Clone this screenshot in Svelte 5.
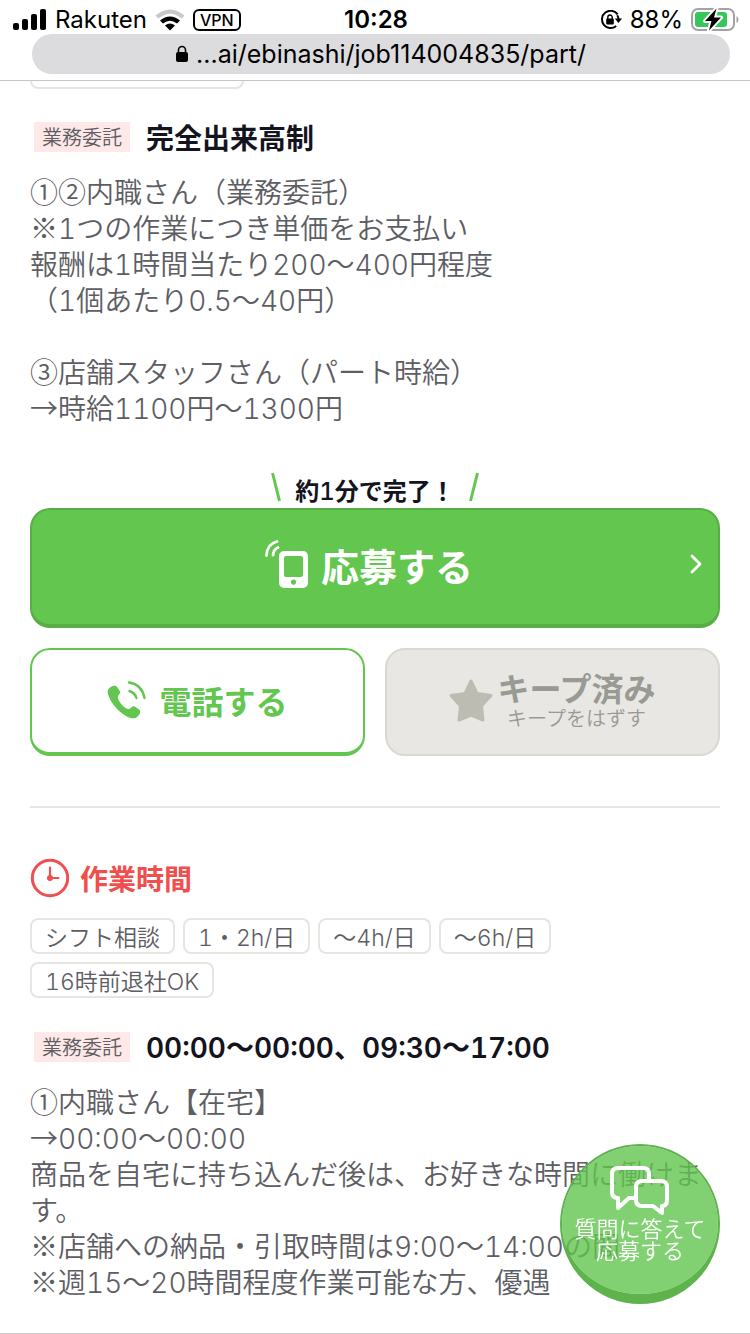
<script>
  const payLines = [
    '①②内職さん（業務委託）',
    '※1つの作業につき単価をお支払い',
    '報酬は1時間当たり200〜400円程度',
    '（1個あたり0.5〜40円）',
    '',
    '③店舗スタッフさん（パート時給）',
    '→時給1100円〜1300円'
  ];

  const timeTags = ['シフト相談', '1・2h/日', '〜4h/日', '〜6h/日', '16時前退社OK'];

  const timeLines = [
    '①内職さん【在宅】',
    '→00:00〜00:00',
    '商品を自宅に持ち込んだ後は、お好きな時間に働けます。',
    '※店舗への納品・引取時間は9:00〜14:00の間',
    '※週15〜20時間程度作業可能な方、優遇'
  ];

  // latin letters and figures use their own, wider face
  const split = (text) => text.match(/[0-9A-Za-z:.\/]+|[^0-9A-Za-z:.\/]+/g) || [];
  const isLatin = (part) => /^[0-9A-Za-z:.\/]/.test(part);

  let kept = $state(true);
</script>

{#snippet mixed(text)}{#each split(text) as part}{#if isLatin(part)}<span class="latin">{part}</span>{:else}{part}{/if}{/each}{/snippet}

<div class="page">
  <header>
    <div class="status">
      <div class="status-left">
        <svg width="34" height="22" viewBox="0 0 34 22">
          <rect x="0" y="14" width="6" height="7" rx="2" />
          <rect x="9" y="10" width="6" height="11" rx="2" />
          <rect x="18" y="5" width="6" height="16" rx="2" />
          <rect x="27" y="0" width="6" height="21" rx="2" />
        </svg>
        <span class="carrier">Rakuten</span>
        <svg width="30" height="22" viewBox="0 0 30 22">
          <path d="M0.5 6.5Q15 -5.500 29.500 6.500L26.600 9.400Q15 0 3.400 9.400Z" fill="#c9c9cb" />
          <path d="M5 11.500Q15 3.500 25 11.500L22 14.500Q15 9 8 14.500Z" />
          <path d="M10 16.500Q15 12.500 20 16.500L15 21.500Z" />
        </svg>
        <span class="vpn">VPN</span>
      </div>
      <span class="clock">10:28</span>
      <div class="status-right">
        <svg width="22" height="20" viewBox="0 0 22 20">
          <path d="M17.6 4.4A8.6 8.6 0 1 0 16.2 15.9" fill="none" stroke="#000" stroke-width="2" />
          <path d="M17.2 5.2Q18.4 7 18.5 9" fill="none" stroke="#000" stroke-width="2" />
          <path d="M14.8 8.6H22L18.4 13Z" />
          <rect x="6.2" y="8.6" width="7.6" height="6" rx="1" />
          <path d="M7.8 9V7.2a2.2 2.2 0 0 1 4.4 0V9" fill="none" stroke="#000" stroke-width="1.4" />
        </svg>
        <span class="percent">88%</span>
        <svg width="48" height="24" viewBox="0 0 48 24">
          <rect x="1" y="1" width="42" height="21" rx="6" fill="none" stroke="#a3a3a5" stroke-width="2" />
          <rect x="4" y="4" width="32" height="15" rx="3" fill="#35c759" />
          <path d="M45.5 8v7q2-1.200 2-3.500t-2-3.500z" fill="#a3a3a5" />
          <path d="M25.500 0.500 14 13h6.500l-2.500 9.500L30 9.500h-7z" stroke="#fff" stroke-width="4" stroke-linejoin="round" />
          <path d="M25.500 0.500 14 13h6.500l-2.500 9.500L30 9.500h-7z" />
        </svg>
      </div>
    </div>
    <div class="address">
      <svg width="12" height="18" viewBox="0 0 12 18">
        <rect x="0" y="7" width="12" height="10" rx="2" />
        <path d="M2.500 8V5a3.500 3.500 0 0 1 7 0v3" fill="none" stroke="#000" stroke-width="1.600" />
      </svg>
      <span>...ai/ebinashi/job114004835/part/</span>
    </div>
  </header>

  <main>
    <div class="tag-end"></div>

    <div class="condition">
      <span class="badge">業務委託</span>
      <h3>完全出来高制</h3>
    </div>
    <div class="text">
      {#each payLines as line}
        <p>{@render mixed(line)}</p>
      {/each}
    </div>

    <div class="lead">
      <svg width="10" height="30" viewBox="0 0 10 30"><path d="M1.500 1 8.500 29" /></svg>
      <span>{@render mixed('約1分で完了！')}</span>
      <svg width="10" height="30" viewBox="0 0 10 30"><path d="M8.500 1 1.500 29" /></svg>
    </div>

    <button class="apply">
      <svg width="44" height="48" viewBox="0 0 44 48">
        <path fill-rule="evenodd" fill="#fff" d="M19 11H38a5 5 0 0 1 5 5V43a5 5 0 0 1-5 5H19a5 5 0 0 1-5-5V16a5 5 0 0 1 5-5ZM21 16a2 2 0 0 0-2 2V35a2 2 0 0 0 2 2H36a2 2 0 0 0 2-2V18a2 2 0 0 0-2-2ZM28.500 39.500a2.600 2.600 0 1 0 0.010 0Z" />
        <path d="M1.500 15.500Q2 4 12 1.500M8 15Q8.500 9.500 13 7.500" fill="none" stroke="#fff" stroke-width="2.800" stroke-linecap="round" />
      </svg>
      <span>応募する</span>
      <svg class="arrow" width="12" height="20" viewBox="0 0 12 20">
        <path d="M2 2 10 10 2 18" fill="none" stroke="#fff" stroke-width="2.800" stroke-linecap="round" stroke-linejoin="round" />
      </svg>
    </button>

    <div class="actions">
      <button class="call">
        <svg width="40" height="38" viewBox="0 0 40 38">
          <path d="M3 6.500C6 4 9 4 10.500 6.500L13 10.500C13.500 13 10.500 14.500 10.800 17C12 21 17 27 21 28C23.500 28.500 24.500 24.500 27.500 25.300L32 28.500C34.500 31 32.500 34 29.500 36.500C27 38 23 37.500 19 35C11 30.500 3 21 1 13C0.300 10 1 8.200 3 6.500Z" fill="#62c64f" />
          <path d="M22 1.500Q35 3.500 37.500 17M22.500 10Q28 12 29.500 17" fill="none" stroke="#62c64f" stroke-width="2.400" stroke-linecap="round" />
        </svg>
        <span>電話する</span>
      </button>
      <button class="keep" aria-pressed={kept} onclick={() => (kept = !kept)}>
        <svg width="44" height="44" viewBox="0 0 44 44">
          <path d="M22 2 28 14.500 42 16.500 32.500 27 34 41 22 36 10 41 11.500 27 2 16.500 16 14.500Z" fill="#bcbcb2" stroke="#bcbcb2" stroke-width="3" stroke-linejoin="round" />
        </svg>
        <span class="keep-label">
          <strong>キープ済み</strong>
          <small>キープをはずす</small>
        </span>
      </button>
    </div>

    <hr />

    <h2>
      <svg width="40" height="40" viewBox="0 0 40 40">
        <circle cx="20" cy="20" r="17.700" fill="none" stroke="#f04f4f" stroke-width="3" />
        <path d="M20 9.500V20H28.500" fill="none" stroke="#f04f4f" stroke-width="2.200" stroke-linecap="round" />
        <circle cx="20" cy="20" r="3" fill="#f04f4f" />
      </svg>
      作業時間
    </h2>
    <ul class="tags">
      {#each timeTags as tag}
        <li>{@render mixed(tag)}</li>
      {/each}
    </ul>

    <div class="condition">
      <span class="badge">業務委託</span>
      <h3>{@render mixed('00:00〜00:00、09:30〜17:00')}</h3>
    </div>
    <div class="text">
      {#each timeLines as line}
        <p>{@render mixed(line)}</p>
      {/each}
    </div>
  </main>

  <button class="chat">
    <svg width="60" height="50" viewBox="0 0 60 50" fill="none" stroke="#fff" stroke-width="4" stroke-linejoin="round">
      <path d="M39 13V8Q39 2 33 2H8Q2 2 2 8V26Q2 32 8 32V42L19 32H25" />
      <path d="M32 15H51Q57 15 57 21V34Q57 40 52 40V47L43 40H32Q26 40 26 34V21Q26 15 32 15Z" />
    </svg>
    <span>質問に答えて<br />応募する</span>
  </button>
</div>

<style>
  :global(body) {
    background: #fff;
  }

  .page {
    min-height: 100vh;
    box-sizing: border-box;
    border-bottom: 1px solid #c6c6c8;
    color: #5d5d64;
    font-family: 'Noto Sans CJK JP', sans-serif;
    font-weight: 350;
  }

  .latin {
    font-family: Inter, 'Noto Sans CJK JP', sans-serif;
    font-variant-numeric: tabular-nums;
    line-height: 1;
  }

  button {
    font-family: inherit;
    padding: 0;
    margin: 0;
    box-sizing: border-box;
    cursor: pointer;
  }

  svg {
    display: block;
    flex-shrink: 0;
  }

  header {
    border-bottom: 1px solid #c6c6c8;
    padding-bottom: 6px;
    color: #000;
    font-family: Inter, sans-serif;
    font-weight: 400;
  }

  .status {
    display: grid;
    grid-template-columns: 1fr auto 1fr;
    align-items: center;
    height: 34px;
    padding: 6px 11px 0 13px;
    box-sizing: border-box;
    font-size: 24px;
    line-height: 28px;
  }

  .status-left,
  .status-right {
    display: flex;
    align-items: center;
  }

  .status-left {
    gap: 8px;
  }

  .status-right {
    justify-content: flex-end;
    gap: 8px;
  }

  .vpn {
    border: 2px solid #000;
    border-radius: 6px;
    padding: 0 5px;
    font-size: 16px;
    font-weight: 500;
    line-height: 18px;
  }

  .clock {
    font-weight: 600;
  }

  .address {
    display: flex;
    align-items: center;
    justify-content: center;
    gap: 8px;
    height: 40px;
    margin: 0 20px 0 32px;
    border-radius: 20px;
    background: #dcdcde;
    font-size: 25px;
  }

  main {
    padding: 0 30px 32px;
  }

  .tag-end {
    width: 214px;
    height: 8px;
    box-sizing: border-box;
    border: 2px solid #e6e6e0;
    border-top: 0;
    border-radius: 0 0 8px 8px;
  }

  .condition {
    display: flex;
    align-items: center;
    gap: 16px;
    padding: 0 4px;
    margin-top: 33px;
  }

  .badge {
    padding: 0 8px;
    background: #ffe8e8;
    font-size: 20px;
    line-height: 30px;
  }

  h3 {
    margin: 0;
    color: #14141e;
    font-size: 28px;
    font-weight: 700;
    line-height: 30px;
  }

  h3 .latin {
    font-weight: 600;
  }

  .text {
    margin-top: 21px;
    font-size: 28px;
    line-height: 36px;
  }

  .text p {
    min-height: 36px;
    margin: 0;
  }

  .text .latin {
    font-weight: 300;
  }

  .lead {
    display: flex;
    justify-content: center;
    gap: 14px;
    margin-top: 47px;
    color: #14141e;
    font-size: 24px;
    font-weight: 700;
    line-height: 36px;
  }

  .lead .latin {
    font-weight: 500;
  }

  .lead path {
    fill: none;
    stroke: #62c64f;
    stroke-width: 3;
  }

  .apply {
    position: relative;
    display: flex;
    align-items: center;
    justify-content: center;
    gap: 12px;
    width: 100%;
    height: 120px;
    padding: 0 12px 6px 0;
    border: 2px solid #57ae46;
    border-bottom-width: 4px;
    border-radius: 20px;
    background: #62c64f;
    color: #fff;
    font-size: 38px;
    font-weight: 700;
  }

  .arrow {
    position: absolute;
    right: 16px;
  }

  .actions {
    display: grid;
    grid-template-columns: 1fr 1fr;
    gap: 20px;
    margin-top: 20px;
  }

  .actions button {
    display: flex;
    align-items: center;
    justify-content: center;
    height: 108px;
    padding-bottom: 2px;
    border-radius: 20px;
  }

  .call {
    gap: 12px;
    border: 2px solid #62c64f;
    border-bottom-width: 4px;
    background: #fff;
    color: #62c64f;
    font-size: 32px;
    font-weight: 700;
  }

  .keep {
    gap: 4px;
    border: 2px solid #d9d9d0;
    background: #e8e7e3;
    color: #999a94;
  }

  .keep-label {
    display: flex;
    flex-direction: column;
    align-items: center;
  }

  .keep strong {
    font-size: 32px;
    line-height: 34px;
  }

  .keep small {
    font-size: 20px;
    font-weight: 350;
    line-height: 28px;
  }

  hr {
    height: 2px;
    margin: 50px 0;
    border: 0;
    background: #e6e6e0;
  }

  h2 {
    display: flex;
    align-items: center;
    gap: 10px;
    margin: 0;
    color: #f04f4f;
    font-size: 28px;
    font-weight: 700;
    line-height: 40px;
  }

  .tags {
    display: flex;
    flex-wrap: wrap;
    gap: 8px;
    margin: 20px 0 0;
    padding: 0;
    list-style: none;
  }

  .tags li {
    padding: 0 13px;
    border: 2px solid #e6e6e0;
    border-radius: 8px;
    font-size: 23px;
    line-height: 32px;
  }

  .tags .latin {
    font-weight: 300;
  }

  .chat {
    position: fixed;
    right: 30px;
    bottom: 30px;
    display: flex;
    flex-direction: column;
    align-items: center;
    width: 160px;
    height: 160px;
    padding-top: 20px;
    border: 2px solid #5fb34c;
    border-bottom-width: 10px;
    border-radius: 50%;
    background: rgba(98, 198, 79, 0.8);
    background-clip: padding-box;
    color: #fff;
    font-size: 22px;
    font-weight: 350;
    line-height: 22px;
    white-space: nowrap;
  }
</style>
